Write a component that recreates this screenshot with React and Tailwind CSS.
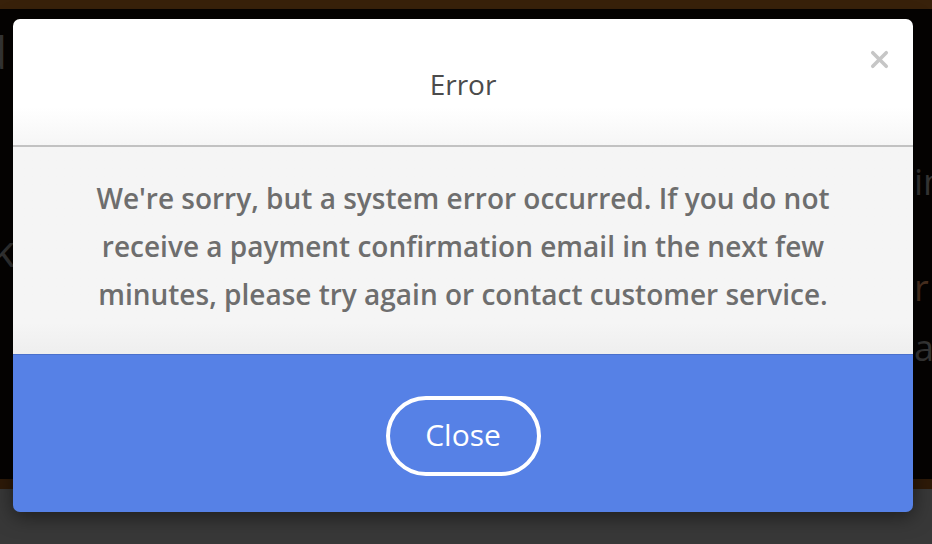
import { X } from "lucide-react";

export default function App() {
  return (
    <div className="relative w-[932px] h-[544px] overflow-hidden bg-[#050302] font-['Open_Sans',sans-serif]">
      {/* dimmed page behind the overlay */}
      <div className="flex flex-col h-full">
        <div className="h-[9px] bg-[#38210a]" />
        <div className="flex-1 bg-[#050302]" />
        <div className="h-[10px] bg-[#2e1a08]" />
        <div className="h-[55px] bg-[#383838]" />
      </div>
      <span className="absolute left-[-20px] top-[30px] text-[44px] leading-none text-[#353535]">d</span>
      <span className="absolute left-[-8px] top-[228px] text-[44px] leading-none text-[#333333]">k</span>
      <span className="absolute left-[914px] top-[164px] text-[36px] leading-none text-[#353535]">in</span>
      <span className="absolute left-[914px] top-[270px] text-[36px] leading-none text-[#4a3020]">r</span>
      <span className="absolute left-[914px] top-[330px] text-[36px] leading-none text-[#353535]">a</span>

      {/* modal */}
      <div className="absolute left-[13px] top-[19px] w-[900px] h-[493px] rounded-[7px] overflow-hidden flex flex-col shadow-[0_4px_20px_rgba(0,0,0,0.5)]">
        <div className="relative h-[128px] bg-gradient-to-b from-white from-70% to-[#f6f6f6] flex items-center justify-center border-b-2 border-[#c2c2c2]">
          <h2 className="text-[28px] text-[#4b4b4b] mt-[4px]">Error</h2>
          <button className="absolute right-[20px] top-[27px] text-[#c6c6c6]">
            <X size={27} strokeWidth={3.2} />
          </button>
        </div>
        <div className="h-[207px] bg-gradient-to-b from-[#f5f5f5] from-85% to-[#eeeeee] flex items-center justify-center pb-[10px]">
          <p className="w-[800px] text-center text-[28px] font-semibold leading-[48px] text-[#6e6e6e]">
            We're sorry, but a system error occurred. If you do not receive a payment confirmation email in the next few minutes, please try again or contact customer service.
          </p>
        </div>
        <div className="flex-1 bg-[#5681e6] border-t border-[#4a70cc] flex items-center justify-center">
          <button className="w-[155px] h-[80px] mt-[4px] rounded-full border-[4px] border-white text-white text-[30px] flex items-center justify-center pb-[2px]">
            Close
          </button>
        </div>
      </div>
    </div>
  );
}
